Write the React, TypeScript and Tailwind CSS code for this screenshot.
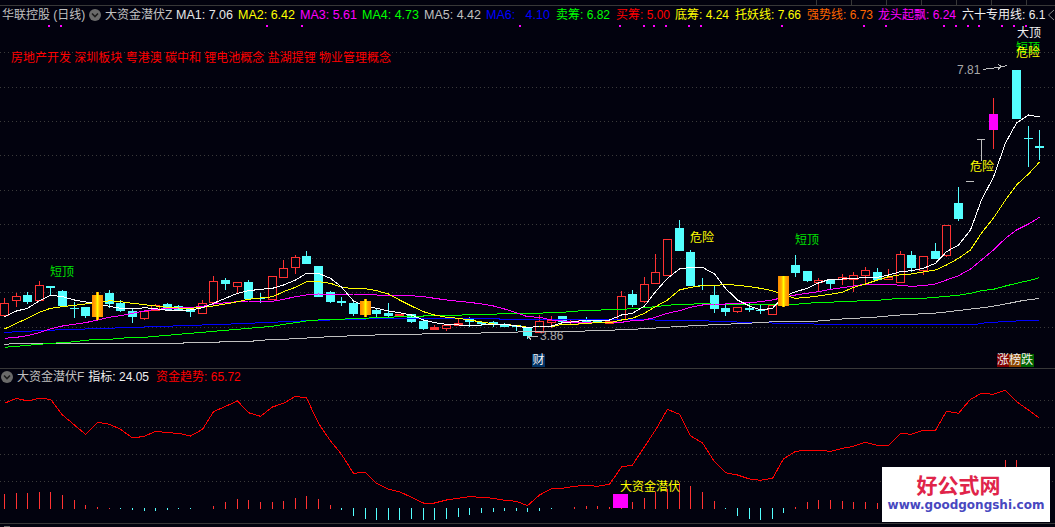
import { useId } from "react"

const FONT = "font-['Liberation_Sans','Noto_Sans_CJK_SC',sans-serif]"

// pixel column of candle i
const cx = (i: number) => Math.floor(4.4 + 11.635 * i)

// kind: r hollow red, R filled red, c cyan, g gold, m magenta, w gray
type Candle = [number, number, number, number, number, string]

const candles: Candle[] = [
  [0, 298, 303, 315, 315, "r"], [1, 293, 296, 300, 307, "r"], [2, 292, 295, 302, 304, "c"], [3, 281, 285, 300, 301, "r"],
  [4, 286, 286, 288, 295, "c"], [5, 290, 291, 306, 307, "c"], [6, 302, 308, 309, 318, "c"], [7, 307, 307, 316, 318, "c"],
  [8, 292, 295, 317, 320, "g"], [9, 290, 293, 304, 308, "c"], [10, 300, 303, 311, 312, "c"], [11, 308, 311, 317, 323, "c"],
  [12, 310, 311, 318, 320, "r"], [13, 304, 305, 310, 310, "r"], [14, 303, 304, 310, 311, "c"], [15, 305, 306, 310, 311, "c"],
  [16, 309, 309, 312, 317, "c"], [17, 300, 303, 313, 314, "r"], [18, 276, 281, 302, 303, "r"], [19, 278, 280, 284, 290, "c"],
  [20, 282, 282, 286, 294, "r"], [21, 280, 282, 299, 300, "c"], [22, 293, 298, 299, 303, "c"], [23, 276, 276, 299, 300, "r"],
  [24, 260, 268, 277, 278, "r"], [25, 255, 257, 267, 274, "r"], [26, 251, 256, 264, 264, "c"], [27, 266, 266, 297, 297, "c"],
  [28, 291, 292, 302, 303, "c"], [29, 297, 301, 303, 306, "c"], [30, 301, 303, 314, 316, "c"], [31, 299, 301, 315, 317, "g"],
  [32, 309, 310, 314, 319, "c"], [33, 303, 313, 316, 319, "c"], [34, 314, 314, 316, 317, "R"], [35, 314, 314, 322, 323, "c"],
  [36, 319, 321, 329, 330, "c"], [37, 325, 327, 329, 330, "R"], [38, 324, 325, 328, 331, "r"], [39, 319, 323, 325, 326, "R"],
  [40, 317, 319, 322, 327, "c"], [41, 321, 322, 324, 326, "c"], [42, 321, 322, 324, 327, "c"], [43, 323, 325, 327, 327, "c"],
  [44, 325, 325, 327, 331, "c"], [45, 328, 328, 336, 339, "c"], [46, 315, 321, 332, 332, "r"], [47, 316, 320, 322, 328, "r"],
  [48, 316, 316, 322, 322, "c"], [49, 319, 319, 324, 325, "r"], [50, 317, 320, 322, 324, "c"], [51, 320, 320, 322, 323, "c"],
  [52, 321, 321, 323, 324, "R"], [53, 291, 296, 319, 320, "r"], [54, 290, 294, 305, 307, "c"], [55, 277, 284, 301, 303, "r"],
  [56, 254, 272, 283, 283, "r"], [57, 239, 239, 275, 276, "r"], [58, 220, 228, 251, 251, "c"], [59, 250, 252, 286, 286, "c"],
  [60, 278, 285, 286, 290, "c"], [61, 286, 295, 309, 313, "c"], [62, 303, 308, 312, 316, "c"], [63, 307, 307, 311, 313, "r"],
  [64, 303, 308, 310, 312, "c"], [65, 305, 310, 311, 314, "c"], [66, 305, 305, 314, 314, "r"], [67, 276, 276, 306, 307, "g"],
  [68, 255, 265, 273, 277, "c"], [69, 271, 271, 281, 282, "c"], [70, 278, 280, 282, 292, "r"], [71, 280, 280, 284, 289, "c"],
  [72, 274, 277, 279, 285, "r"], [73, 272, 275, 279, 292, "r"], [74, 267, 270, 275, 283, "r"], [75, 268, 272, 280, 280, "c"],
  [76, 269, 277, 279, 279, "r"], [77, 251, 254, 282, 282, "r"], [78, 251, 255, 268, 272, "c"], [79, 256, 256, 270, 275, "r"],
  [80, 243, 251, 259, 259, "c"], [81, 225, 225, 255, 257, "r"], [82, 187, 203, 219, 221, "c"], [83, 181, 181, 181, 181, "w"],
  [84, 139, 139, 139, 161, "w"], [85, 98, 114, 130, 149, "m"], [87, 70, 70, 119, 119, "c"], [88, 126, 138, 139, 167, "c"],
  [89, 130, 146, 148, 160, "c"],
]

const ma1 = [316.7, 311, 308.3, 300.7, 295.3, 296.7, 300, 302, 304, 306.3, 308.3, 309, 307.7, 308.7, 310.3, 310.3, 310, 307.7, 303.3, 298.3, 293.3, 290.7, 289.3, 288.3, 285, 280, 273.3, 273.3, 278.3, 287, 301, 306, 308.3, 311, 312.7, 315, 320, 322.7, 324.3, 325, 325.7, 325, 324.3, 324.3, 326, 328, 326, 326, 322.7, 321.7, 320, 320, 320, 315, 313.3, 306, 291.7, 278.3, 269, 267.3, 267.3, 274, 288.3, 300, 306, 310, 308.3, 296.7, 291.7, 288.3, 283, 279, 279, 278.7, 277.3, 277.3, 275, 271.7, 270.7, 268.3, 263.3, 251.7, 245, 230, 200, 177, 143, 123, 115, 117]
const ma2 = [329, 323.3, 318.3, 312.3, 308.3, 306.7, 305.3, 304, 302.7, 300.7, 301.7, 303.3, 304.7, 306, 307.3, 308, 308.3, 307.3, 306, 304, 301.7, 299.3, 298, 296.7, 291.7, 287.3, 281.7, 281.7, 283.3, 287.3, 288.7, 288.7, 290.7, 294, 300, 306, 311.7, 315, 317.3, 318.3, 320, 322, 324, 324.7, 325.3, 327.3, 326.7, 326.7, 324.3, 324.3, 323.3, 322.7, 322.7, 320, 318.3, 313.3, 306.7, 300, 290, 287.3, 285.7, 285.7, 284.3, 285.3, 286.7, 288.3, 290.7, 295, 298.3, 297.3, 296, 294.3, 292.3, 287.3, 284, 280, 276.7, 274.7, 274, 272, 270, 265, 258.3, 250, 233, 218, 200, 185, 174, 162]
const ma3 = [338.3, 337.3, 335.7, 332.7, 328.7, 326, 324.3, 322.7, 320, 317.3, 315.7, 313.3, 311, 309.3, 308.7, 308, 307.7, 306.3, 304, 302.7, 301.7, 301, 301, 301.3, 299.3, 296.7, 295, 294, 294.3, 294.7, 294, 294, 295, 295.3, 295.3, 295.7, 296.7, 298.3, 300, 301.3, 302.3, 304, 306, 309, 312.7, 316.7, 317.3, 320, 321, 322.7, 322.7, 322.7, 322.7, 322.3, 320.7, 320, 317.3, 313.3, 310.7, 307.3, 305, 304, 304, 303.3, 302.7, 301.7, 300, 297.3, 295, 293.3, 291.7, 289.3, 287.7, 286, 284.3, 284.3, 284.3, 285.3, 286.3, 285.7, 284, 280, 275.7, 269, 260, 250, 238.3, 230, 224, 217.3]
const ma4 = [347.3, 346.3, 345.3, 344.3, 343.3, 342.7, 341.7, 340.3, 339.3, 339.3, 338.3, 337.3, 337.3, 336.3, 335.3, 334.3, 333.3, 332.3, 331.3, 330.3, 329.3, 328.3, 327.3, 326.3, 324.3, 322.7, 321, 320, 319.3, 319.3, 318.3, 318.3, 317.3, 317.3, 316.7, 316, 316, 315.3, 315.3, 315.3, 314.3, 314.3, 314.3, 313.3, 313.3, 313.3, 313.3, 312.3, 312.3, 311.3, 310.3, 310.3, 309.3, 309.3, 308.7, 307.7, 306.7, 305.3, 304.3, 304.3, 303.3, 304.3, 304.3, 304.3, 304.3, 304.3, 304.3, 304.3, 304.3, 303.3, 302.3, 302.3, 301.3, 301.3, 300.3, 300.3, 299.3, 298.3, 298.3, 298.3, 297.3, 296.3, 295.3, 293.3, 290.7, 289.3, 286, 283.3, 280.7, 277.7]

// these two lines step, so they are kept as raw x,y pairs
const ma5 = "4,344.5 14,343.5 183,343.5 183,342.5 219,342.5 219,341.5 253,341.5 253,340.5 277,339.5 302,338.5 312,337.5 337,336.5 358,335.5 393,334.5 452,333.5 510,332.5 527,331.5 568,331.5 603,330.5 627,329.5 650,328.5 662,327.5 697,325.5 720,324.5 743,323.5 778,321.5 812,321.5 836,319.5 848,318.5 872,317.5 893,315.5 907,314.5 930,313.5 942,312.5 967,309.5 985,307.5 1003,304.5 1013,302.5 1023,300.5 1039,298.5"
const ma6 = "4,332.5 21,331.5 43,330.5 68,329.5 103,328.5 127,327.5 162,326.5 185,325.5 220,324.5 243,323.5 267,322.5 290,321.5 313,320.5 385,318.5 612,319.5 697,320.5 720,321.5 753,322.5 790,323.5 837,324.5 975,324.5 987,322.5 1010,321.5 1022,320.5 1039,320.5"

const trend = [403.3, 398.3, 401, 398.3, 399.3, 415, 425, 434.3, 422.3, 424.3, 429.3, 438, 436.3, 431.3, 432.7, 433.3, 436, 429.3, 411.7, 406.3, 401, 412.7, 416.3, 407, 403.3, 396.3, 398, 423.3, 441, 454.3, 473.3, 472.3, 483.3, 489.3, 491.7, 497.3, 503, 503, 500, 498.3, 496.7, 497.3, 498.3, 500.3, 501.3, 505.7, 495, 488.7, 488.3, 486.3, 485.3, 486.3, 484.3, 467, 465, 446.7, 430, 409.3, 414.3, 435.7, 443, 461.7, 472.7, 475, 479, 480.3, 478.3, 459, 451.3, 450.3, 450.3, 451.3, 448.3, 446.3, 442.3, 445.3, 445.3, 433.3, 434.3, 430.3, 430.3, 411.3, 413.3, 399.3, 393.3, 394.3, 390.3, 401.7, 410, 418.3]
const bars = [15, 16, 16, 17, 17, 14, 9, 4, 2, 1, -1, -2, -3, -3, -2, -1, -1, 0, 3, 7, 10, 9, 7, 7, 8, 11, 13, 10, 4, -2, -8, -11, -12, -12, -12, -11, -12, -12, -11, -9, -7, -5, -4, -3, -3, -4, -3, -1, 0, 2, 3, 3, 2, 1, 7, 11, 17, 20, 26, 23, 17, 8, -1, -8, -11, -12, -11, -5, 2, 7, 9, 9, 8, 7, 7, 6, 5, 5, 5, 5, 5, 5, 5, 5, 5, 5, 49, 49, 42, 30]

const dots = [48, 60, 266, 301, 519, 619, 643, 653, 665, 688, 700, 781, 863, 885, 943, 955, 967, 978, 1001, 1013, 1025]
const mainGrid = [52, 87, 121, 155, 190, 224, 258, 292, 327]
const lowGrid = [400, 427, 454, 481]
const ticks = [816, 851, 886, 921, 956, 991, 1026]

const line = (ys: number[]) => ys.map((y, i) => `${cx(i) + 0.5},${y}`).join(" ")

function Candles({ gradientId, top }: { gradientId: string; top: boolean }) {
  return (
    <g shapeRendering="crispEdges">
      {candles
        .filter((c) => (c[5] === "g" || c[5] === "m") === top)
        .map(([i, hi, t, b, lo, kind]) => {
          const x = cx(i)
          if (kind === "g")
            return (
              <g key={i} fill={`url(#${gradientId})`}>
                <rect x={x - 1} y={hi} width={3} height={lo - hi} />
                <rect x={x - 5} y={t} width={11} height={b - t} />
              </g>
            )
          if (kind === "w")
            return (
              <g key={i} fill="#c0c0c0">
                <rect x={x - 4} y={t} width={8} height={1} />
                <rect x={x} y={hi} width={1} height={lo - hi} />
              </g>
            )
          if (kind === "m")
            return (
              <g key={i}>
                <rect x={x} y={hi} width={1} height={lo - hi} fill="#ff3232" />
                <rect x={x - 4} y={t} width={9} height={b - t} fill="#ff00ff" />
              </g>
            )
          if (kind === "c")
            return (
              <g key={i} fill="#54ffff">
                <rect x={x} y={hi} width={1} height={lo - hi} />
                <rect x={x - 4} y={t} width={9} height={Math.max(b - t, 1)} />
              </g>
            )
          return (
            <g key={i}>
              <rect x={x} y={hi} width={1} height={lo - hi} fill="#ff3232" />
              <rect
                x={x - 3.5}
                y={t + 0.5}
                width={8}
                height={b - t}
                fill={kind === "R" ? "#ff3232" : "#02020e"}
                stroke="#ff3232"
              />
            </g>
          )
        })}
    </g>
  )
}

function MainChart() {
  const gradientId = useId()
  return (
    <svg className="absolute inset-0" width={1055} height={362} viewBox="0 6 1055 362">
      <defs>
        <linearGradient id={gradientId}>
          <stop offset="0" stopColor="#ff8800" />
          <stop offset="0.3" stopColor="#ffaa00" />
          <stop offset="0.5" stopColor="#ffff00" />
          <stop offset="0.7" stopColor="#ffaa00" />
          <stop offset="1" stopColor="#ff8800" />
        </linearGradient>
      </defs>
      {mainGrid.map((y) => (
        <line key={y} x1={0} x2={1055} y1={y + 0.5} y2={y + 0.5} stroke="#3a3a3a" strokeDasharray="1 3" />
      ))}
      {dots.map((x) => (
        <rect key={x} x={x} y={25} width={2} height={2} fill="#ff00ff" />
      ))}
      <Candles gradientId={gradientId} top={false} />
      <g fill="none" strokeWidth={1} shapeRendering="crispEdges">
        <polyline points={ma6} stroke="#0000ff" />
        <polyline points={ma5} stroke="#c0c0c0" />
        <polyline points={line(ma4)} stroke="#00ff00" />
        <polyline points={line(ma3)} stroke="#ff00ff" />
        <polyline points={line(ma2)} stroke="#ffff00" />
        <polyline points={line(ma1)} stroke="#ffffff" />
      </g>
      <Candles gradientId={gradientId} top />
      {/* price arrows */}
      <g fill="none" stroke="#c0c0c0" shapeRendering="crispEdges">
        <polyline points="983,69.5 990,68.5 998,67.5 1007,65.5" />
        <polyline points="998,64.5 1002,66.5 998,69.5" />
        <polyline points="538,336.5 528,336.5 531,339.5" />
      </g>
    </svg>
  )
}

function LowerChart() {
  return (
    <svg className="absolute inset-0" width={1055} height={154} viewBox="0 369 1055 154">
      {lowGrid.map((y) => (
        <line key={y} x1={0} x2={1055} y1={y + 0.5} y2={y + 0.5} stroke="#3a3a3a" strokeDasharray="1 3" />
      ))}
      <g shapeRendering="crispEdges">
        {bars.map((v, i) =>
          v === 0 ? null : (
            <rect
              key={i}
              x={cx(i)}
              y={v > 0 ? 509 - v : 508}
              width={1}
              height={Math.abs(v)}
              fill={v > 0 ? "#ff3232" : "#54ffff"}
            />
          ),
        )}
        <polyline points={line(trend)} fill="none" stroke="#ff0000" />
        <rect x={613} y={494} width={15} height={14} fill="#ff00ff" />
      </g>
    </svg>
  )
}

function Chevron() {
  return (
    <svg width={12} height={12} viewBox="0 0 12 12" className="shrink-0">
      <circle cx={6} cy={6} r={6} fill="#6a6a6a" />
      <path d="M3 4.5 6 7.5 9 4.5" fill="none" stroke="#1c1c1c" strokeWidth={1.6} />
    </svg>
  )
}

// chart label on the free canvas
function Mark({ x, y, color, children }: { x: number; y: number; color: string; children: string }) {
  return (
    <span
      className={`absolute text-xs leading-3 whitespace-nowrap ${color}`}
      style={{ left: x, top: y - 6 }}
    >
      {children}
    </span>
  )
}

const headerItems: [string, string][] = [
  ["MA1: 7.06", "w-[62px] text-[12.5px] text-[#e8e8e8]"],
  ["MA2: 6.42", "w-[62px] text-[12.5px] text-[#ffff00]"],
  ["MA3: 5.61", "w-[62px] text-[12.5px] text-[#ff00ff]"],
  ["MA4: 4.73", "w-[62px] text-[12.5px] text-[#00ff00]"],
  ["MA5: 4.42", "w-[62px] text-[12.5px] text-[#c0c0c0]"],
  ["MA6:   4.10", "w-[70px] text-[12.5px] text-[#0000ff]"],
  ["卖筹: 6.82", "w-[60px] text-[#00ff00]"],
  ["买筹: 5.00", "w-[59px] text-[#ff0000]"],
  ["底筹: 4.24", "w-[60px] text-[#ffff00]"],
  ["托妖线: 7.66", "w-[72px] text-[#ffff00]"],
  ["强势线: 6.73", "w-[71px] text-[#ff6600]"],
  ["龙头起飘: 6.24", "w-[84px] text-[#ff00ff]"],
  ["六十专用线: 6.1", "text-[#f0f0f0]"],
]

export default function App() {
  return (
    <div className={`w-[1055px] h-[527px] overflow-hidden bg-[#02020e] flex flex-col ${FONT}`}>
      {/* top strip */}
      <div className="h-[6px] shrink-0 border-b border-[#383838] flex justify-end">
        <div className="flex h-full pr-[28px] gap-[34px]">
          {ticks.map((x) => (
            <div key={x} className="w-px h-full bg-[#383838]" />
          ))}
        </div>
      </div>

      {/* main chart */}
      <div className="relative h-[362px] shrink-0">
        <MainChart />
        <div className="relative flex items-center h-[18px] pl-[2px] text-xs whitespace-pre overflow-hidden">
          <span className="w-[87px] text-[#c0c0c0]">华联控股 (日线)</span>
          <Chevron />
          <span className="ml-[4px] w-[71px] text-[#c0c0c0]">大资金潜伏Z</span>
          {headerItems.map(([text, color]) => (
            <span key={text} className={`shrink-0 ${color}`}>
              {text}
            </span>
          ))}
        </div>
        <div className="relative mt-[26px] pl-[11px] text-xs leading-4 text-[#ff0000] whitespace-nowrap">
          房地产开发 深圳板块 粤港澳 碳中和 锂电池概念 盐湖提锂 物业管理概念
        </div>

        <svg className="absolute right-0 top-[3px]" width={8} height={12} viewBox="0 0 8 12">
          <path d="M7 1 1.5 6 7 11" fill="none" stroke="#8a8a8a" />
        </svg>

        <Mark x={50} y={266} color="text-[#00e000]">短顶</Mark>
        <Mark x={795} y={234} color="text-[#00e000]">短顶</Mark>
        <Mark x={690} y={232} color="text-[#ffff00]">危险</Mark>
        <Mark x={970} y={161} color="text-[#ffff00]">危险</Mark>
        <Mark x={1017} y={27} color="text-[#f0f0f0]">大顶</Mark>
        <Mark x={1016} y={42} color="text-[#00e000]">短顶</Mark>
        <Mark x={1016} y={47} color="text-[#ffff00]">危险</Mark>
        <Mark x={957} y={64} color="text-[#a8a8a8]">7.81</Mark>
        <Mark x={540} y={330} color="text-[#a8a8a8]">3.86</Mark>

        <span className="absolute left-[532px] top-[348px] w-[13px] h-[13px] bg-[#003366] text-[#f0f0f0] text-xs leading-[13px] text-center">
          财
        </span>
        <div className="absolute left-[997px] top-[348px] flex text-xs leading-[13px] text-[#f0f0f0]">
          <span className="w-[12px] h-[13px] bg-[#800000]">涨</span>
          <span className="w-[12px] h-[13px] bg-[#8b4500]">榜</span>
          <span className="w-[13px] h-[13px] bg-[#006400]">跌</span>
        </div>
      </div>

      {/* lower indicator */}
      <div className="relative h-[155px] shrink-0 border-t border-[#383838]">
        <LowerChart />
        <div className="relative flex items-center h-[16px] pl-[1px] gap-[4px] text-xs whitespace-nowrap">
          <Chevron />
          <span className="text-[#c0c0c0]">大资金潜伏F</span>
          <span className="text-[#f0f0f0]">指标: 24.05</span>
          <span className="ml-[3px] text-[#ff0000]">资金趋势: 65.72</span>
        </div>
        <span className="absolute left-[620px] top-[112px] text-xs leading-3 text-[#ffff00] whitespace-nowrap">
          大资金潜伏
        </span>
      </div>

      {/* bottom strip, next pane's icon is cut off here */}
      <div className="flex-1 border-t border-[#383838] pl-[4px] pt-[2px]">
        <div className="w-[6px] h-px bg-[#6a6a6a]" />
      </div>

      {/* site watermark */}
      <div className="absolute left-[882px] top-[467px] w-[168px] h-[55px] bg-white flex flex-col items-center">
        <span className="mt-[4px] pr-[15px] text-[21px] leading-[26px] font-bold text-[#e0244a] font-['Noto_Sans_CJK_SC',sans-serif]">
          好公式网
        </span>
        <span className="text-xs leading-[16px] font-bold text-[#4848c0] font-['DejaVu_Sans',sans-serif]">
          www.goodgongshi.com
        </span>
      </div>
    </div>
  )
}
